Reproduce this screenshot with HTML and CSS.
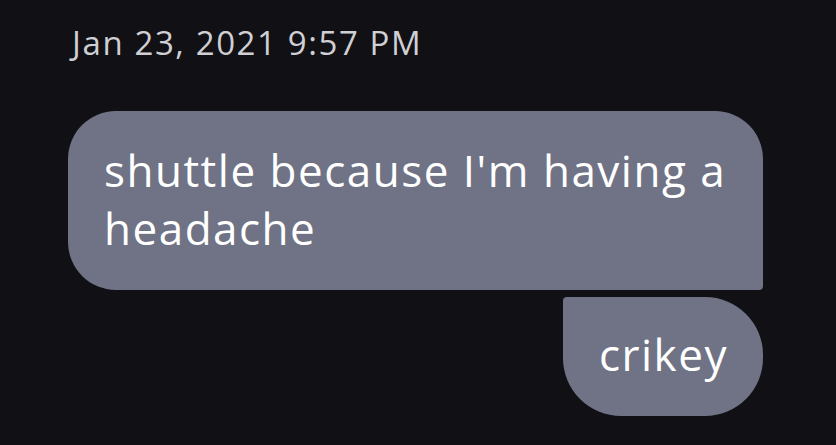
FILE: index.html
```html
<!DOCTYPE html>
<html>
<head>
<meta charset="utf-8">
<link rel="stylesheet" href="styles.css">
</head>
<body>
<div class="thread">
  <div class="stamp">Jan 23, 2021 9:57 PM</div>
  <div class="msgs">
    <div class="bubble first">shuttle because I'm having a headache</div>
    <div class="bubble last">crikey</div>
  </div>
</div>
</body>
</html>
```

FILE: styles.css
```css
html, body {
  margin: 0;
  padding: 0;
  background: #111115;
  height: 100%;
  overflow: hidden;
}
.thread {
  width: 695px;
  padding: 23px 0 0 68px;
  font-family: "Open Sans", "Noto Sans", sans-serif;
}
.stamp {
  color: #cfcfd4;
  font-size: 33px;
  line-height: 40px;
  letter-spacing: 1.6px;
  padding-left: 4px;
  height: 88px;
}
.msgs {
  display: flex;
  flex-direction: column;
  align-items: flex-end;
  gap: 7px;
}
.bubble {
  background: #6f7385;
  color: #ffffff;
  font-size: 44px;
  line-height: 58px;
  letter-spacing: 1.5px;
  box-sizing: border-box;
}
.first {
  width: 695px;
  padding: 30px 36px 33px 36px;
  border-radius: 48px 48px 4px 48px;
}
.last {
  border-radius: 4px 58px 58px 58px;
  padding: 28px 35px 33px 36px;
}
```
